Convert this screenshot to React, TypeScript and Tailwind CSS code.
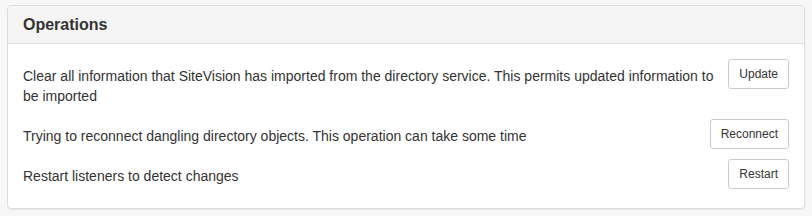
const operations = [
  {
    text: 'Clear all information that SiteVision has imported from the directory service. This permits updated information to be imported',
    label: 'Update',
  },
  { text: 'Trying to reconnect dangling directory objects. This operation can take some time', label: 'Reconnect' },
  { text: 'Restart listeners to detect changes', label: 'Restart' },
];

export default function App() {
  return (
    <div
      className="min-h-[216px] bg-[#f7f7f7] px-[7px] pt-[5px] text-[14px] leading-[20px] text-[#333]"
      style={{ fontFamily: '"Liberation Sans", Arial, sans-serif' }}
    >
      <div className="rounded-[4px] border border-[#ddd] bg-white shadow-[0_1px_1px_rgba(0,0,0,0.05)]">
        <div className="rounded-t-[3px] border-b border-[#ddd] bg-[#f5f5f5] px-[15px] py-[10px]">
          <h3 className="text-[16px] font-bold leading-[17px]">Operations</h3>
        </div>
        <div className="flex flex-col gap-[10px] px-[15px] pb-[19px] pt-[15px]">
          {operations.map((op, i) => (
            <div key={op.label} className={`flex items-start gap-[8px] ${i === 0 ? 'min-h-[50px]' : ''}`}>
              <p className="flex-1 pt-[7px]">{op.text}</p>
              <button
                type="button"
                className="h-[30px] shrink-0 rounded-[3px] border border-[#ccc] bg-white px-[10px] text-[12px] leading-[18px] text-[#333]"
              >
                {op.label}
              </button>
            </div>
          ))}
        </div>
      </div>
    </div>
  );
}
